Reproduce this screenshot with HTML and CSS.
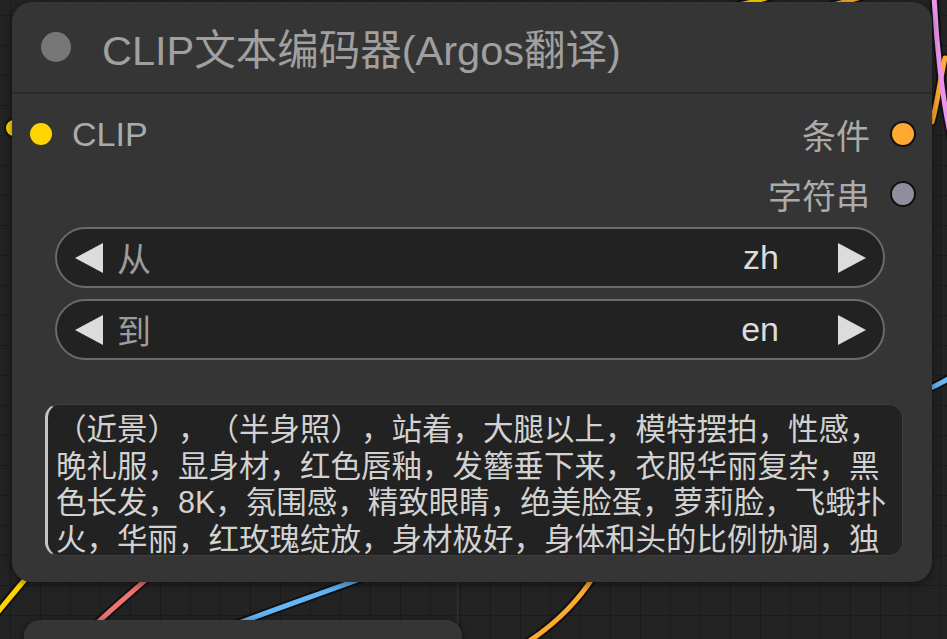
FILE: index.html
```html
<!DOCTYPE html>
<html lang="zh">
<head>
  <meta charset="UTF-8" />
  <meta name="viewport" content="width=device-width,initial-scale=1" />
  <title>CLIP文本编码器(Argos翻译)</title>
  <link rel="stylesheet" href="styles.css">
</head>
<body>

  <div class="canvas">

    <!-- links between nodes -->
    <svg class="wires" width="947" height="639" viewBox="0 0 947 639">
      <g class="wire-bg">
        <path d="M932,122 C938,100 940,80 945,58" />
        <path d="M934,-5 C936,40 942,100 952,142" />
        <path d="M930,388 C936,386 942,382 952,377" />
        <path d="M738,5 C750,3 760,0 772,-4" />
        <path d="M832,5 C842,3 852,0 864,-4" />
        <path d="M-2,612 C8,600 16,590 28,576" />
        <path d="M150,576 C130,594 110,610 92,628" />
        <path d="M368,576 C320,594 272,610 226,628" />
        <path d="M594,576 C576,604 552,628 518,648" />
      </g>
      <path class="wire orange" d="M932,122 C938,100 940,80 945,58" />
      <path class="wire pink" d="M934,-5 C936,40 942,100 952,142" />
      <path class="wire blue" d="M930,388 C936,386 942,382 952,377" />
      <path class="wire yellow" d="M738,5 C750,3 760,0 772,-4" />
      <path class="wire orange" d="M832,5 C842,3 852,0 864,-4" />
      <path class="wire yellow" d="M-2,612 C8,600 16,590 28,576" />
      <path class="wire red" d="M150,576 C130,594 110,610 92,628" />
      <path class="wire blue" d="M368,576 C320,594 272,610 226,628" />
      <path class="wire orange" d="M594,576 C576,604 552,628 518,648" />
      <circle class="wire-end" cx="14" cy="128" r="9" />
      <line class="guide" x1="457.5" y1="560" x2="457.5" y2="639" />
    </svg>

    <!-- node below, mostly off screen -->
    <div class="node node-next"></div>

    <!-- CLIP text encode node -->
    <div class="node">
      <div class="node-title">
        <span class="title-dot"></span>
        <span class="title-text">CLIP文本编码器(Argos翻译)</span>
      </div>

      <div class="node-body">
        <div class="slot-row">
          <div class="slot slot-in">
            <span class="dot dot-clip"></span>
            <span class="slot-label">CLIP</span>
          </div>
          <div class="slot slot-out">
            <span class="slot-label">条件</span>
            <span class="dot dot-cond"></span>
          </div>
        </div>
        <div class="slot-row">
          <div class="slot slot-out">
            <span class="slot-label">字符串</span>
            <span class="dot dot-string"></span>
          </div>
        </div>

        <div class="widgets">
          <div class="combo">
            <svg class="arrow" width="28" height="30" viewBox="0 0 28 30"><polygon points="28,0 28,30 0,15" /></svg>
            <span class="combo-label">从</span>
            <span class="combo-value">zh</span>
            <svg class="arrow" width="28" height="30" viewBox="0 0 28 30"><polygon points="0,0 28,15 0,30" /></svg>
          </div>
          <div class="combo">
            <svg class="arrow" width="28" height="30" viewBox="0 0 28 30"><polygon points="28,0 28,30 0,15" /></svg>
            <span class="combo-label">到</span>
            <span class="combo-value">en</span>
            <svg class="arrow" width="28" height="30" viewBox="0 0 28 30"><polygon points="0,0 28,15 0,30" /></svg>
          </div>
        </div>

        <textarea class="prompt" readonly>（近景），（半身照），站着，大腿以上，模特摆拍，性感，晚礼服，显身材，红色唇釉，发簪垂下来，衣服华丽复杂，黑色长发，8K，氛围感，精致眼睛，绝美脸蛋，萝莉脸，飞蛾扑火，华丽，红玫瑰绽放，身材极好，身体和头的比例协调，独自一人，高清画质，细节丰富</textarea>
      </div>
    </div>

  </div>

</body>
</html>
```

FILE: styles.css
```css
body { margin: 0; background: #222; font-family: "Liberation Sans", "Noto Sans CJK SC", sans-serif; }

.canvas {
  position: relative;
  width: 947px;
  height: 639px;
  overflow: hidden;
  background-color: #232323;
  background-image:
    linear-gradient(#1b1b1b 1px, transparent 1px),
    linear-gradient(90deg, #1b1b1b 1px, transparent 1px);
  background-size: 30px 30px;
  background-position: 10px 15px;
}

/* wires */
.wires { position: absolute; left: 0; top: 0; }
.wire-bg path { fill: none; stroke: #111; stroke-width: 9; stroke-linecap: round; }
.wire { fill: none; stroke-width: 5; stroke-linecap: round; }
.wire.pink { stroke: #ec94ec; }
.wire.orange { stroke: #ffa931; }
.wire.blue { stroke: #64b6f7; }
.wire.yellow { stroke: #ffd500; }
.wire.red { stroke: #f07373; }
.wire-end { fill: #ffd500; stroke: #111; stroke-width: 2; }
.guide { stroke: #2b3655; stroke-width: 1; }

/* nodes */
.node {
  position: absolute;
  left: 12px;
  top: 2px;
  width: 920px;
  height: 580px;
  box-sizing: border-box;
  background: #353535;
  border-radius: 20px;
  box-shadow: 0 2px 10px rgba(0, 0, 0, .45);
  display: flex;
  flex-direction: column;
}
.node-next { left: 24px; top: 620px; width: 438px; height: 80px; border-radius: 16px; }

.node-title {
  height: 90px;
  display: flex;
  align-items: center;
  border-bottom: 2px solid #2b2b2b;
  flex-shrink: 0;
}
.title-dot { width: 30px; height: 30px; border-radius: 50%; background: #777; margin: 0 31px 0 29px; }
.title-text { font-size: 41.5px; color: #a0a0a0; white-space: nowrap; }

.node-body { padding: 10px 47px 0 43px; display: flex; flex-direction: column; }

.slot-row { height: 60px; display: flex; align-items: center; justify-content: space-between; }
.slot-row:nth-child(2) { justify-content: flex-end; }
.slot { display: flex; align-items: center; font-size: 34px; color: #ababab; }
.slot-in { margin-left: -25px; }
.slot-in .dot { margin-right: 20px; }
.slot-out { margin-right: -31px; }
.slot-out .dot { margin-left: 20px; }
.dot { width: 22px; height: 22px; border-radius: 50%; box-sizing: border-box; }
.dot-clip { background: #ffd500; }
.dot-cond { width: 26px; height: 26px; background: #ffa931; border: 2px solid #111; }
.dot-string { width: 26px; height: 26px; background: #8e8e9c; border: 2px solid #111; }

/* combo widgets */
.widgets { display: flex; flex-direction: column; gap: 11px; margin-top: 3px; }
.combo {
  height: 61px;
  box-sizing: border-box;
  border: 2px solid #6a6a6a;
  border-radius: 31px;
  background: #222;
  display: flex;
  align-items: center;
  padding: 0 17px 0 18px;
  font-size: 34px;
}
.arrow polygon { fill: #dcdcdc; }
.combo-label { color: #9c9c9c; margin-left: 14px; flex: 1; }
.combo-value { color: #dcdcdc; margin-right: 59px; }

/* prompt text */
.prompt {
  margin: 44px -18px 0 -10px;
  height: 152px;
  box-sizing: border-box;
  padding: 6px 12px 0 8px;
  background: #222;
  color: #d2d2d2;
  border: 1px solid #3e3e3e;
  border-left: 3px solid #c4c4c4;
  border-radius: 14px;
  font-family: "Liberation Sans", "Noto Sans CJK SC", sans-serif;
  font-size: 30.5px;
  line-height: 36.5px;
  text-spacing-trim: space-all;
  overflow: hidden;
  resize: none;
  outline: none;
}
```
